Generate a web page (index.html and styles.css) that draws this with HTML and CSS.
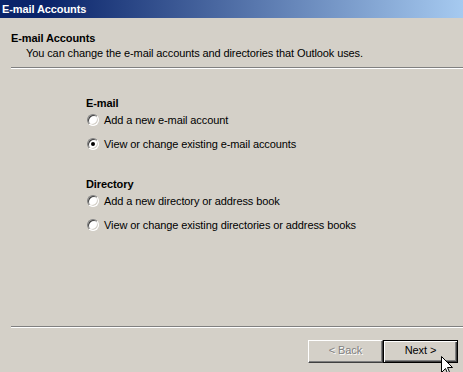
FILE: index.html
```html
<!DOCTYPE html>
<html lang="en">
<head>
    <meta charset="UTF-8">
    <title>E-mail Accounts</title>
    <link rel="stylesheet" href="styles.css">
</head>
<body>
    <div class="window">
        <div class="titlebar">E-mail Accounts</div>

        <div class="header">
            <div class="header-title">E-mail Accounts</div>
            <div class="header-sub">You can change the e-mail accounts and directories that Outlook uses.</div>
        </div>
        <div class="sep"></div>

        <div class="content">
            <div class="group">
                <div class="group-title">E-mail</div>
                <label class="option"><span class="radio"></span>Add a new e-mail account</label>
                <label class="option"><span class="radio checked"></span>View or change existing e-mail accounts</label>
            </div>
            <div class="group">
                <div class="group-title">Directory</div>
                <label class="option"><span class="radio"></span>Add a new directory or address book</label>
                <label class="option"><span class="radio"></span>View or change existing directories or address books</label>
            </div>
        </div>

        <div class="sep"></div>
        <div class="buttons">
            <div class="btn disabled">&lt; Back</div>
            <div class="btn default">Next &gt;</div>
        </div>
    </div>

    <!-- mouse pointer over Next -->
    <svg class="cursor" width="13" height="20" viewBox="0 0 13 20">
        <path d="M0.5 0.5 L0.5 16.5 L4.5 12.5 L7.5 19.5 L9.5 18.5 L6.5 11.5 L11.5 11.5 Z" fill="#fff" stroke="#000" stroke-width="1"/>
    </svg>
</body>
</html>
```

FILE: styles.css
```css
body {
    margin: 0;
    background: #d4d0c8;
    font-family: 'Liberation Sans', Arial, sans-serif;
    font-size: 11px;
    letter-spacing: -0.1px;
    color: #000;
    overflow: hidden;
}

.window {
    width: 463px;
    height: 372px;
    display: flex;
    flex-direction: column;
}

.titlebar {
    height: 18px;
    line-height: 18px;
    padding-left: 2px;
    color: #fff;
    font-weight: bold;
    background: linear-gradient(to right, #0a246a 10%, #a6caf0);
}

.header {
    padding: 14px 0 7px 11px;
}

.header-title {
    font-weight: bold;
    line-height: 13px;
}

.header-sub {
    line-height: 13px;
    margin-top: 2px;
    padding-left: 15px;
}

.sep {
    margin-left: 11px;
    height: 0;
    border-top: 1px solid #808080;
    border-bottom: 1px solid #fff;
}

.content {
    flex: 1;
    padding: 28px 0 0 86px;
}

.group {
    display: flex;
    flex-direction: column;
    gap: 7px;
    margin-bottom: 26px;
}

.group-title {
    font-weight: bold;
    line-height: 13px;
    margin-bottom: -6px;
}

.option {
    display: flex;
    align-items: center;
    gap: 5px;
    height: 17px;
    padding-left: 1px;
}

.radio {
    position: relative;
    width: 10px;
    height: 10px;
    border-radius: 50%;
    background: #fff;
    border: 1px solid;
    border-color: #808080 #fff #fff #808080;
    box-shadow: inset 1px 1px #404040, inset -1px -1px #d4d0c8;
}

.radio.checked::after {
    content: "";
    position: absolute;
    left: 3px;
    top: 3px;
    width: 4px;
    height: 4px;
    border-radius: 50%;
    background: #000;
}

.buttons {
    display: flex;
    justify-content: flex-end;
    padding: 12px 5px 9px 0;
}

.btn {
    box-sizing: border-box;
    width: 75px;
    height: 23px;
    line-height: 19px;
    text-align: center;
    border: 1px solid;
    border-color: #fff #404040 #404040 #fff;
    box-shadow: inset -1px -1px #808080;
}

.btn.disabled {
    color: #808080;
    text-shadow: 1px 1px #fff;
}

.btn.default {
    border: 1px solid #000;
    box-shadow: inset 1px 1px #fff, inset -1px -1px #404040, inset -2px -2px #808080;
}

.cursor {
    position: absolute;
    left: 441px;
    top: 356px;
}
```
